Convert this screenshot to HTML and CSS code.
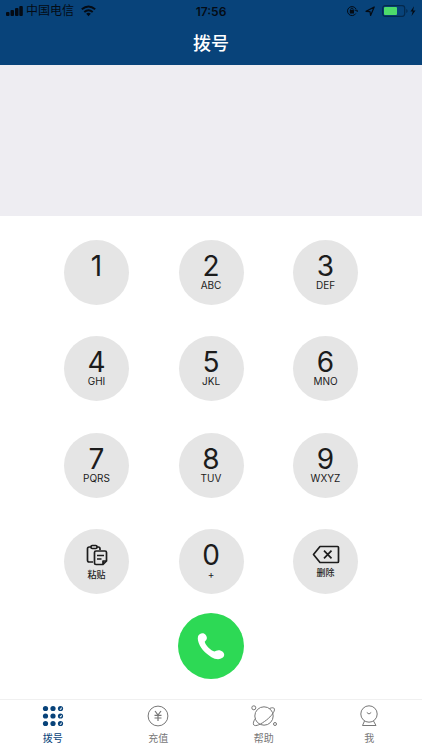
FILE: index.html
```html
<!DOCTYPE html>
<html lang="zh-CN">
<head>
<meta charset="utf-8">
<meta name="viewport" content="width=device-width, initial-scale=1">
<title>拨号</title>
<link rel="stylesheet" href="styles.css">
</head>
<body>
<header class="header">
  <div class="status">
    <div class="status-side">
      <svg width="17" height="12" viewBox="0 0 17 12" aria-hidden="true"><rect x="0" y="7" width="3.500" height="4" rx="1"/><rect x="4.500" y="5" width="3.500" height="6" rx="1"/><rect x="9" y="3" width="3.500" height="8" rx="1"/><rect x="13.300" y="1" width="3.500" height="10" rx="1"/></svg>
      <span class="carrier">中国电信</span>
      <svg class="wifi" width="15" height="12" viewBox="0 0 15 12" aria-hidden="true"><path d="M.8 4.300Q7.500-1.500 14.200 4.300M3.300 7Q7.500 3.400 11.700 7" fill="none" stroke="currentColor" stroke-width="1.900"/><path d="M5.200 8.800Q7.500 6.900 9.800 8.800L7.500 11.200z"/></svg>
    </div>
    <time class="clock">17:56</time>
    <div class="status-side status-end">
      <svg width="12" height="12" viewBox="0 0 12 12" aria-hidden="true"><path d="M9.800 8.500A4.500 4.500 0 1 1 10 4M8.700 5.200h2.500V7" fill="none" stroke="currentColor"/><rect x="3.800" y="5" width="4.200" height="3.500" rx=".5"/><path d="M4.700 5.200V4.400a1.200 1.200 0 0 1 2.400 0v.8" fill="none" stroke="currentColor" stroke-width=".9"/></svg>
      <svg width="10" height="12" viewBox="0 0 10 12" aria-hidden="true"><path d="M1 6.400 9.200 2 5.600 10.400 5 6.600z" fill="none" stroke="currentColor" stroke-width="1.200" stroke-linejoin="round"/></svg>
      <svg width="34" height="12" viewBox="0 0 34 12" aria-hidden="true"><rect x=".7" y=".7" width="22" height="10.600" rx="2.500" fill="none" stroke="#04294d" stroke-width="1.200"/><rect x="2" y="2" width="13" height="8" rx="1" fill="#4ddb6b"/><path d="M24.300 4v4q1.300-.5 1.300-2t-1.300-2z" fill="#04294d"/><path d="M32 1.200 28.500 6.500h2.200L29.500 11l4-5.600h-2.400z"/></svg>
    </div>
  </div>
  <h1 class="title">拨号</h1>
</header>
<output class="display" aria-label="号码"></output>
<main class="dialer">
  <div class="keypad">
    <button class="key"><span class="digit">1</span></button>
    <button class="key"><span class="digit">2</span><span class="letters">ABC</span></button>
    <button class="key"><span class="digit">3</span><span class="letters">DEF</span></button>
    <button class="key"><span class="digit">4</span><span class="letters">GHI</span></button>
    <button class="key"><span class="digit">5</span><span class="letters">JKL</span></button>
    <button class="key"><span class="digit">6</span><span class="letters">MNO</span></button>
    <button class="key"><span class="digit">7</span><span class="letters">PQRS</span></button>
    <button class="key"><span class="digit">8</span><span class="letters">TUV</span></button>
    <button class="key"><span class="digit">9</span><span class="letters">WXYZ</span></button>
    <button class="key key-action">
      <svg width="22" height="22" viewBox="0 0 22 22" fill="none" stroke="currentColor" stroke-width="1.700" stroke-linejoin="round" aria-hidden="true"><path d="M7 18H3.200Q1.500 18 1.500 16.300V4.700Q1.500 3 3.200 3H5m6 0h1.300Q14 3 14 4.700V6"/><rect x="5" y="1.500" width="6" height="3" rx="1.200"/><path d="M10 7h9q1.500 0 1.500 1.500V17l-3.500 3.500h-7q-1.500 0-1.500-1.500V8.500Q8.500 7 10 7zM11 11.500h7M11 15h4.500M17 20v-3h3"/></svg>
      <span class="caption">粘贴</span>
    </button>
    <button class="key"><span class="digit">0</span><span class="letters">+</span></button>
    <button class="key key-action">
      <svg width="28" height="19" viewBox="0 0 28 19" fill="none" stroke="currentColor" stroke-width="1.700" stroke-linejoin="round" aria-hidden="true"><path d="M8 1.500h17.500q1 0 1 1v14q0 1-1 1H8L1.500 9.500z"/><path d="m12 5.700 7.500 7.600m0-7.600L12 13.300"/></svg>
      <span class="caption">删除</span>
    </button>
  </div>
  <button class="call" aria-label="拨打">
    <svg width="28" height="28" viewBox="0 0 28 28" aria-hidden="true"><path d="M1 4.500C1.500 2 5 .5 7.300 1.700 9.500 3 10.800 6 9.200 8L7.700 9.700C8.500 13.500 14 18.700 17.500 19.500L19.200 18.700C21 17.700 24 18 26 20 28 22.500 27.300 24.500 25.500 25.800 22.500 28 18 27.300 14.500 25.200 8 21 2.500 15.500 1 8.500 .7 7 .7 5.700 1 4.500z" fill="#fff"/></svg>
  </button>
</main>
<nav class="tabs">
  <a class="tab tab-active" href="#dial">
    <svg width="22" height="22" viewBox="0 0 22 22" aria-hidden="true"><g fill="currentColor"><circle cx="3.500" cy="3.500" r="2.600"/><circle cx="11" cy="3.500" r="2.600"/><circle cx="18.500" cy="3.500" r="2.600"/><circle cx="3.500" cy="11" r="2.600"/><circle cx="11" cy="11" r="2.600"/><circle cx="18.500" cy="11" r="2.600"/><circle cx="3.500" cy="18.500" r="2.600"/><circle cx="11" cy="18.500" r="2.600"/><circle cx="18.500" cy="18.500" r="2.600"/></g><path d="M19.800 2.500q.4 2.200-1.800 2.600l-.3-1.200q1.300-.2 1.300-1.400zM19.800 10q.4 2.200-1.800 2.600l-.3-1.200q1.300-.2 1.300-1.400zM19.800 17.500q.4 2.200-1.800 2.600l-.3-1.200q1.300-.2 1.300-1.400z" fill="#fff"/></svg>
    <span>拨号</span>
  </a>
  <a class="tab" href="#recharge">
    <svg width="22" height="22" viewBox="0 0 22 22" fill="none" stroke="currentColor" aria-hidden="true"><circle cx="11" cy="11" r="9.900"/><path d="m8 6 3 4 3-4M11 10v6M7.500 10.300h7M7.500 13h7" stroke-width="1.200"/></svg>
    <span>充值</span>
  </a>
  <a class="tab" href="#help">
    <svg width="26" height="22" viewBox="0 0 26 22" fill="none" stroke="currentColor" aria-hidden="true"><circle cx="13" cy="11" r="9.200"/><circle cx="2.800" cy="2.800" r="2"/><circle cx="24" cy="19" r="1.500"/><path d="M18.500 3.500C21 2.400 23 2.500 23.400 3.800 24 6.500 20.500 11 15.500 15 10 19.300 4.500 21.800 2.800 20 1.800 18.500 2.500 16 4.500 13.500"/></svg>
    <span>帮助</span>
  </a>
  <a class="tab" href="#me">
    <svg width="20" height="22" viewBox="0 0 20 22" fill="none" stroke="currentColor" aria-hidden="true"><circle cx="10" cy="9" r="8.200"/><path d="M5.500 16 3.500 20.500h13.500L14.500 16M7.800 7.500q2.200 3 4.400 0"/></svg>
    <span>我</span>
  </a>
</nav>
</body>
</html>
```
FILE: styles.css
```css
* {
  box-sizing: border-box;
}

body {
  margin: 0;
  min-height: 100vh;
  display: flex;
  flex-direction: column;
  background: #fff;
  color: #1c1c1c;
  font-family: Inter, "Noto Sans CJK SC", sans-serif;
}

button {
  border: 0;
  padding: 0;
  color: inherit;
  font: inherit;
  cursor: pointer;
}

.header {
  height: 65px;
  background: #08437a;
  color: #fff;
}

.status {
  display: flex;
  align-items: center;
  height: 22px;
  padding: 0 6px;
  color: #040b14;
}

.status svg {
  fill: currentColor;
}

.status-side {
  flex: 1;
  display: flex;
  align-items: center;
  gap: 3px;
}

.status-end {
  justify-content: flex-end;
  gap: 7px;
}

.carrier {
  font-size: 12px;
  line-height: 20px;
}

.wifi {
  margin-left: 4px;
}

.clock {
  font-size: 12px;
  font-weight: 600;
}

.title {
  margin: 0;
  font-size: 18px;
  font-weight: 500;
  line-height: 43px;
  text-align: center;
}

.display {
  display: block;
  height: 151px;
  background: #eeedf2;
}

.dialer {
  flex: 1;
  display: flex;
  flex-direction: column;
  align-items: center;
  padding: 24px 64px 20px;
}

.keypad {
  flex: 1;
  align-self: stretch;
  display: grid;
  grid-template-columns: repeat(3, 65px);
  grid-auto-rows: 65px;
  justify-content: space-between;
  align-content: space-between;
}

.key {
  display: flex;
  flex-direction: column;
  align-items: center;
  padding-top: 13px;
  border-radius: 50%;
  background: #e5e5e5;
}

.digit {
  font-size: 28px;
  line-height: 27px;
}

.letters {
  font-size: 10px;
  line-height: 10px;
}

.key-action {
  justify-content: center;
  gap: 2px;
  padding-top: 3px;
}

.caption {
  font-size: 9px;
  font-weight: 500;
  line-height: 14px;
}

.call {
  display: grid;
  place-items: center;
  width: 66px;
  height: 66px;
  margin-top: 19px;
  border-radius: 50%;
  background: #2dd955;
}

.tabs {
  display: grid;
  grid-template-columns: repeat(4, 1fr);
  height: 51px;
  border-top: 1px solid #f0f0f0;
}

.tab {
  display: flex;
  flex-direction: column;
  align-items: center;
  padding-top: 5px;
  color: #777;
  font-size: 10px;
  line-height: 22px;
  text-decoration: none;
}

.tab-active {
  color: #08437a;
}
```
